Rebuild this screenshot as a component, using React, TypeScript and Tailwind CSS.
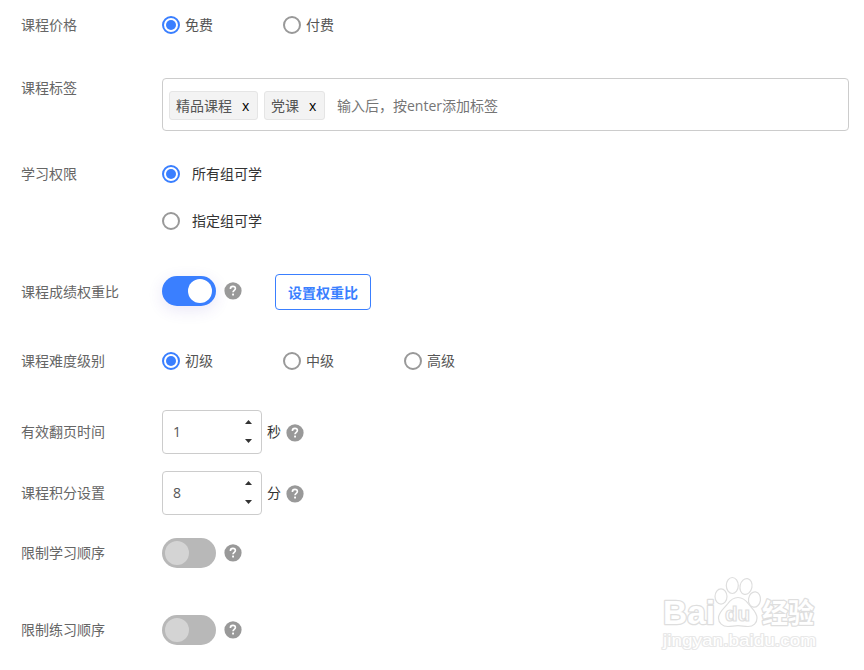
import React, { useState } from 'react';

const FONT = "font-['Open_Sans','Noto_Sans_CJK_SC',sans-serif]";

interface RowProps {
  label: string;
  className?: string;
  children: React.ReactNode;
}

function Row({ label, className = '', children }: RowProps) {
  return (
    <div className={`flex pl-[21px] ${className}`}>
      <div className="w-[141px] shrink-0 text-[#666]">{label}</div>
      {children}
    </div>
  );
}

interface RadioProps {
  label: string;
  checked: boolean;
  onSelect: () => void;
  className?: string;
}

function Radio({ label, checked, onSelect, className = '' }: RadioProps) {
  return (
    <button
      type="button"
      role="radio"
      aria-checked={checked}
      onClick={onSelect}
      className={`flex h-5 items-center ${className}`}
    >
      <span
        className={`flex h-[18px] w-[18px] items-center justify-center rounded-full border-2 ${
          checked ? 'border-[#3a7fff]' : 'border-[#999]'
        }`}
      >
        {checked && <span className="h-[10px] w-[10px] rounded-full bg-[#3a7fff]" />}
      </span>
      <span>{label}</span>
    </button>
  );
}

function Help({ className = '' }: { className?: string }) {
  return (
    <svg className={`h-[18px] w-[18px] shrink-0 ${className}`} viewBox="0 0 18 18" fill="none">
      <circle cx="9" cy="8.8" r="8.6" fill="#999" />
      <path
        d="M6.4 6.9C6.4 5.300 7.300 4.400 8.900 4.400s2.500.9 2.500 2.200c0 1.700-2.400 1.800-2.400 3.700"
        stroke="#fff"
        strokeWidth="1.6"
      />
      <rect x="8.1" y="11.6" width="1.9" height="1.9" rx=".5" fill="#fff" />
    </svg>
  );
}

function Toggle({ on, onToggle }: { on: boolean; onToggle: () => void }) {
  return (
    <button
      type="button"
      role="switch"
      aria-checked={on}
      onClick={onToggle}
      className={`flex h-[30px] w-[54px] shrink-0 items-center rounded-full ${
        on
          ? 'justify-end bg-[#3a7fff] pr-1 shadow-[0_4px_16px_rgba(75,50,190,0.12)]'
          : 'justify-start bg-[#b8b8b8] pl-[3px]'
      }`}
    >
      <span className={`h-6 w-6 rounded-full ${on ? 'bg-white' : 'bg-[#d4d4d4]'}`} />
    </button>
  );
}

interface StepperProps {
  value: number;
  onChange: (value: number) => void;
}

function Stepper({ value, onChange }: StepperProps) {
  return (
    <div className="flex h-[44px] w-[100px] shrink-0 items-center justify-between rounded-[4px] border border-[#ccc] pr-[9px] pl-[10px] text-[#555]">
      <span>{value}</span>
      <div className="flex flex-col gap-[15px] pb-[2px]">
        <button type="button" onClick={() => onChange(value + 1)}>
          <svg className="block h-1 w-[7px]" viewBox="0 0 7 4">
            <path d="M0 4 3.5 0 7 4z" fill="#333" />
          </svg>
        </button>
        <button type="button" onClick={() => onChange(Math.max(0, value - 1))}>
          <svg className="block h-1 w-[7px]" viewBox="0 0 7 4">
            <path d="M0 0 3.5 4 7 0z" fill="#333" />
          </svg>
        </button>
      </div>
    </div>
  );
}

function Watermark() {
  return (
    <svg
      className="pointer-events-none absolute top-[570px] left-[650px] h-[100px] w-[214px]"
      viewBox="0 0 214 100"
      fill="#fff"
      stroke="#dedede"
      strokeWidth="1.2"
    >
      <g strokeWidth="2.6" strokeLinejoin="round" paintOrder="stroke" fontWeight="700">
        <text x="13" y="54" fontSize="34" textLength="52" lengthAdjust="spacingAndGlyphs" fontFamily="Liberation Sans">
          Bai
        </text>
        <text x="112" y="53" fontSize="27" textLength="52" lengthAdjust="spacingAndGlyphs" fontFamily="Noto Sans CJK SC">
          经验
        </text>
      </g>
      <ellipse cx="71" cy="26.5" rx="6" ry="7.7" />
      <ellipse cx="82.3" cy="15.5" rx="6" ry="8" />
      <ellipse cx="96" cy="16.5" rx="6" ry="8" transform="rotate(12 96 16.5)" />
      <ellipse cx="104.5" cy="29.5" rx="6" ry="7.7" transform="rotate(8 104.5 29.5)" />
      <path d="M88 27.5c5 0 8 3 10.500 6.500 3 4 8.500 8 8.500 14 0 5-3.500 8.500-9 8.500-4 0-6-.8-10-.8s-6 .8-10 .8c-5.500 0-9.500-3.500-9.500-8.500 0-6 6-10 9-14 2.500-3.500 5.500-6.500 10.500-6.500z" />
      <text x="75" y="51" fontSize="21" fontWeight="700" textLength="25" lengthAdjust="spacingAndGlyphs" fontFamily="Liberation Sans">
        du
      </text>
      <text
        x="13"
        y="76"
        fontSize="17"
        fontWeight="400"
        strokeWidth="2.2"
        strokeLinejoin="round"
        stroke="#e8e8e8"
        paintOrder="stroke"
        textLength="153"
        lengthAdjust="spacingAndGlyphs"
        fontFamily="Liberation Sans"
      >
        jingyan.baidu.com
      </text>
    </svg>
  );
}

export default function App() {
  const [price, setPrice] = useState('免费');
  const [tags, setTags] = useState(['精品课程', '党课']);
  const [scope, setScope] = useState('所有组可学');
  const [weighted, setWeighted] = useState(true);
  const [level, setLevel] = useState('初级');
  const [seconds, setSeconds] = useState(1);
  const [points, setPoints] = useState(8);
  const [studyOrder, setStudyOrder] = useState(false);
  const [practiceOrder, setPracticeOrder] = useState(false);

  return (
    <div className={`relative h-[670px] w-[864px] overflow-hidden bg-white text-[14px] leading-5 text-[#333] ${FONT}`}>
      <Row label="课程价格" className="h-[50px] items-center">
        {['免费', '付费'].map((p) => (
          <Radio
            key={p}
            label={p}
            checked={price === p}
            onSelect={() => setPrice(p)}
            className="w-[121px] gap-[5px] text-[#555]"
          />
        ))}
      </Row>

      <Row label="课程标签" className="mt-7 items-start">
        <div className="flex h-[53px] w-[687px] items-center gap-[6px] rounded-[4px] border border-[#ccc] px-[6px] pt-[2px]">
          {tags.map((tag) => (
            <span
              key={tag}
              className="flex h-[29px] items-center gap-[10px] rounded-[3px] border border-[#e5e5e5] bg-[#f3f3f3] pr-2 pl-[6px] text-[#555]"
            >
              {tag}
              <button
                type="button"
                className="w-[7px] text-black"
                onClick={() => setTags(tags.filter((t) => t !== tag))}
              >
                x
              </button>
            </span>
          ))}
          <input
            className="ml-[6px] w-[300px] outline-none placeholder:text-[#757575]"
            placeholder="输入后，按enter添加标签"
          />
        </div>
      </Row>

      <Row label="学习权限" className="mt-[33px] items-start">
        <div className="flex flex-col gap-[27px]">
          {['所有组可学', '指定组可学'].map((s) => (
            <Radio key={s} label={s} checked={scope === s} onSelect={() => setScope(s)} className="gap-[12px]" />
          ))}
        </div>
      </Row>

      <Row label="课程成绩权重比" className="mt-[43px] h-9 items-center">
        <div className="flex items-center pb-[2px]">
          <Toggle on={weighted} onToggle={() => setWeighted(!weighted)} />
          <Help className="ml-2" />
        </div>
        <button
          type="button"
          className="ml-[33px] h-9 w-24 rounded-[4px] border border-[#3a7fff] pt-[2px] font-semibold text-[#3a7fff]"
        >
          设置权重比
        </button>
      </Row>

      <Row label="课程难度级别" className="mt-[41px] items-center">
        {['初级', '中级', '高级'].map((l) => (
          <Radio
            key={l}
            label={l}
            checked={level === l}
            onSelect={() => setLevel(l)}
            className="w-[121px] gap-[5px] text-[#555]"
          />
        ))}
      </Row>

      <Row label="有效翻页时间" className="mt-[39px] items-center">
        <Stepper value={seconds} onChange={setSeconds} />
        <span className="ml-[5px]">秒</span>
        <Help className="mt-px ml-[5px]" />
      </Row>

      <Row label="课程积分设置" className="mt-[17px] items-center">
        <Stepper value={points} onChange={setPoints} />
        <span className="ml-[5px]">分</span>
        <Help className="mt-px ml-[5px]" />
      </Row>

      <Row label="限制学习顺序" className="mt-[23px] items-center">
        <Toggle on={studyOrder} onToggle={() => setStudyOrder(!studyOrder)} />
        <Help className="ml-2" />
      </Row>

      <Row label="限制练习顺序" className="mt-[47px] items-center">
        <Toggle on={practiceOrder} onToggle={() => setPracticeOrder(!practiceOrder)} />
        <Help className="ml-2" />
      </Row>

      <Watermark />
    </div>
  );
}
